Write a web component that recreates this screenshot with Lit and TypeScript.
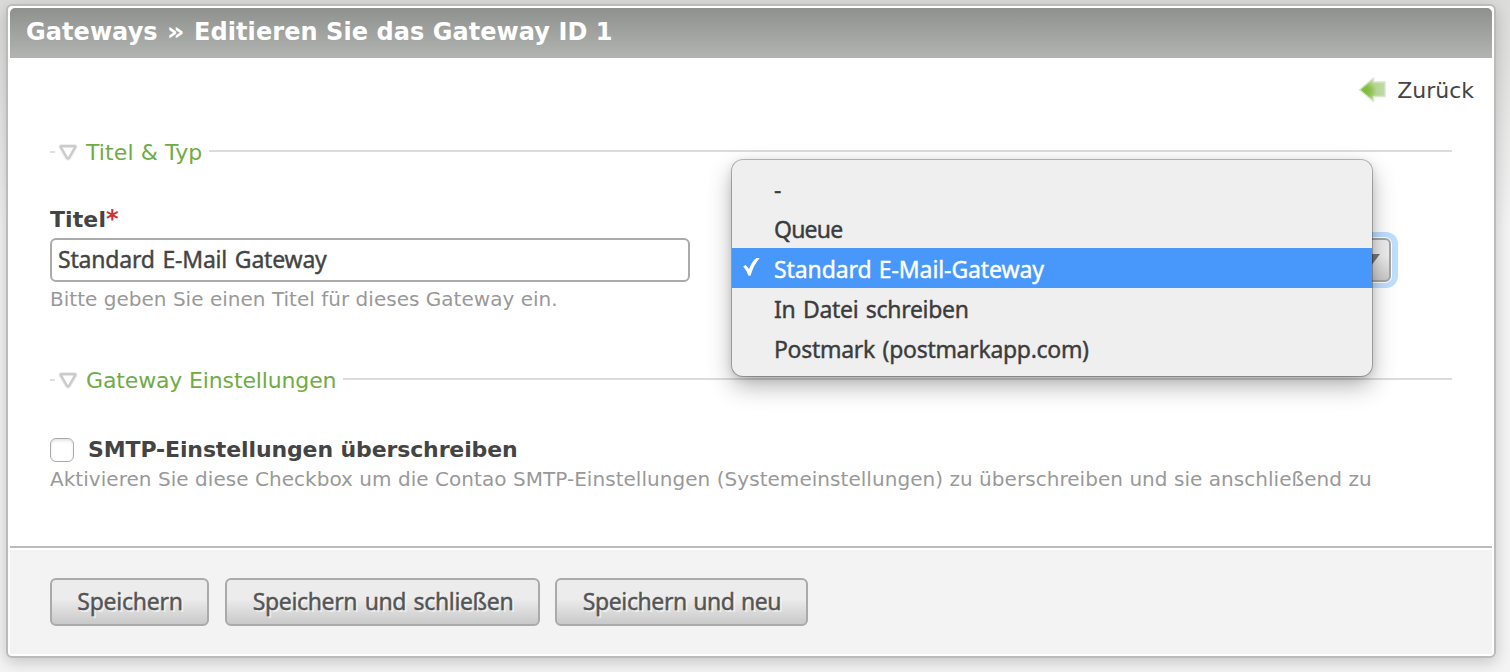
import { LitElement, html, css, svg } from "lit";
import { customElement, property, state } from "lit/decorators.js";
import { classMap } from "lit/directives/class-map.js";

@customElement("section-legend")
class SectionLegend extends LitElement {
  @property() label = "";
  static styles = css`
    :host { display: flex; align-items: center; height: 28px; margin-bottom: 2px; color: #6fac45; font-size: 22px; }
    .dash { width: 5px; height: 2px; background: #dfdfdf; margin-top: 2px; }
    .toggle { width: 20px; height: 18px; margin: 2px 8px 0 3px; flex: none; }
    .label { line-height: 28px; margin-top: 3px; letter-spacing: var(--legend-spacing, 0); white-space: nowrap; }
    .rule { flex: 1; height: 2px; background: #dcdcdc; margin-left: 7px; }
  `;
  render() {
    return html`
      <span class="dash"></span>
      <svg class="toggle" viewBox="0 0 20 18">
        <path d="M3.2 3.2H16.8Q17.6 3.2 17.2 4.2L11 14.8Q10 16.2 9 14.8L2.8 4.2Q2.4 3.2 3.2 3.2Z" fill="#fff" stroke="#eeeeee" stroke-width="4.4" stroke-linejoin="round"/>
        <path d="M3.2 3.2H16.8Q17.6 3.2 17.2 4.2L11 14.8Q10 16.2 9 14.8L2.8 4.2Q2.4 3.2 3.2 3.2Z" fill="#fff" stroke="#cbcbcb" stroke-width="2.4" stroke-linejoin="round"/>
      </svg>
      <span class="label">${this.label}</span>
      <span class="rule"></span>
    `;
  }
}

@customElement("gateway-menu")
class GatewayMenu extends LitElement {
  @state() selected = 2;
  private options = [
    { label: "-", fit: "" },
    { label: "Queue", fit: "queue" },
    { label: "Standard E-Mail-Gateway", fit: "standard" },
    { label: "In Datei schreiben", fit: "file" },
    { label: "Postmark (postmarkapp.com)", fit: "postmark" },
  ];
  static styles = css`
    :host {
      display: block; width: 640px; padding: 8px 0; background: #efefef; border-radius: 11px;
      box-shadow: 0 0 0 1px rgba(0, 0, 0, .25), 0 10px 24px rgba(0, 0, 0, .3), 0 2px 8px rgba(0, 0, 0, .12);
      font: 23px/40px "Noto Sans", sans-serif; color: #3c3c3c;
    }
    .option { display: flex; height: 40px; padding-left: 10px; cursor: default; white-space: nowrap; -webkit-text-stroke: .4px currentColor; }
    .option.selected { background: #4898fb; color: #fff; }
    .mark { width: 32px; height: 40px; flex: none; }
    .option span { padding-top: 1px; }
    .queue { letter-spacing: -.8px; }
    .standard { letter-spacing: -.1px; word-spacing: 1.5px; }
    .file { letter-spacing: -.3px; word-spacing: 1.8px; }
    .postmark { letter-spacing: -.3px; word-spacing: 2px; }
  `;
  render() {
    return html`${this.options.map((o, i) => html`
      <div class=${classMap({ option: true, selected: i === this.selected })} @click=${() => (this.selected = i)}>
        <svg class="mark" viewBox="0 0 32 40">
          ${i === this.selected ? svg`<path d="M1.2 18.6L3.6 17Q5.7 19 7 21Q10.3 12.4 14.4 9.9H17.8Q11.8 16.2 8.5 27.8H6.5Q4.7 22.4 1.2 18.6Z" fill="#fff"/>` : ""}
        </svg>
        <span class=${o.fit}>${o.label}</span>
      </div>`)}`;
  }
}

@customElement("app-root")
class AppRoot extends LitElement {
  static styles = css`
    * { box-sizing: border-box; }
    :host {
      display: block; height: 672px; padding: 4px 14px 14px 6px; box-sizing: border-box; overflow: hidden;
      background: linear-gradient(#dcdddb 0, #dfe0de 50px, #f4f4f4 230px, #f4f4f4);
      font-family: "DejaVu Sans", sans-serif; font-size: 22px; color: #444;
    }
    .panel {
      display: flex; flex-direction: column; height: 654px; border: 2px solid #bbb; border-radius: 6px;
      padding: 2px; background: #fff; box-shadow: 0 4px 16px rgba(0, 0, 0, .2);
    }
    .title {
      flex: none; height: 50px; margin: 0; padding-left: 16px; border-radius: 5px 5px 0 0;
      background: linear-gradient(#8f918e, #b2b4b1); color: #fff;
      font-size: 24px; font-weight: bold; line-height: 48px; letter-spacing: .06px;
    }
    .chevrons { display: inline-block; margin: 0 1px; transform: scaleX(1.15); padding: 0 1px; }
    .back { display: flex; justify-content: flex-end; align-items: center; height: 64px; padding-right: 18px; gap: 10px; }
    .back svg { width: 29px; height: 28px; }
    .form { flex: 1; display: flex; flex-direction: column; padding: 15px 40px 0; }
    .columns { display: grid; grid-template-columns: 640px 640px; column-gap: 60px; height: 198px; padding-top: 37px; }
    .field { display: flex; flex-direction: column; }
    .label { font-weight: bold; font-size: 22px; line-height: 34px; height: 34px; letter-spacing: -.12px; }
    .field .label { line-height: 32px; letter-spacing: .1px; }
    .required { color: #c33; font-size: 24px; line-height: 1; }
    .input {
      height: 44px; border: 2px solid #aaa; border-radius: 6px; padding: 0 6px 2px; background: #fff; width: 640px;
      font: 23px/38px "Noto Sans", sans-serif; color: #444; letter-spacing: -.2px; word-spacing: 2px; -webkit-text-stroke: .4px currentColor;
    }
    .help { margin: 0; font-size: 20px; line-height: 34px; color: #999; white-space: nowrap; letter-spacing: .02px; }
    .smtp-help { letter-spacing: .043px; margin-top: -5px; }
    .choice { position: relative; padding-top: 34px; }
    .select {
      display: flex; justify-content: flex-end; align-items: center; height: 44px; width: 641px; padding-right: 9px;
      border: 2px solid #a5a5a5; border-radius: 6px; background: linear-gradient(#ededed 40%, #c9c9c9);
      box-shadow: 0 0 0 1px #fff, 1px 0 0 6px #bfdfff;
    }
    .select svg { width: 18px; height: 12px; }
    gateway-menu { position: absolute; left: -18px; top: -44px; z-index: 2; }
    section-legend.first { --legend-spacing: .1px; }
    section-legend.second { --legend-spacing: -.14px; }
    .override { display: flex; align-items: center; gap: 14px; margin-top: 38px; height: 34px; }
    .check {
      width: 24px; height: 24px; margin: 0 0 1px; border: 1px solid #aaa; border-radius: 6px; background: #fff;
      box-shadow: inset 0 2px 3px rgba(0, 0, 0, .1); appearance: none;
    }
    .footer {
      flex: none; display: flex; gap: 16px; height: 108px; margin-top: auto; padding: 30px 40px 0; border-top: 2px solid #bbb;
      background: #f3f3f3; box-shadow: inset 0 2px #fff;
    }
    .button {
      height: 48px; padding: 0 0 2px; border: 2px solid #aaa; border-radius: 6px;
      background: linear-gradient(#ececec 0, #ececec 42%, #c9c9c9); color: #555; text-shadow: 2px 2px rgba(255, 255, 255, .55);
      font: 23px/42px "Noto Sans", sans-serif; -webkit-text-stroke: .4px currentColor;
      white-space: nowrap;
    }
    .save { width: 159px; letter-spacing: -.25px; padding-left: 1px; }
    .close { width: 315px; letter-spacing: -.35px; word-spacing: 1.8px; padding-left: 1px; }
    .new { width: 253px; margin-left: -1px; letter-spacing: -.4px; word-spacing: .8px; padding-left: 1px; }
  `;
  render() {
    return html`
      <main class="panel">
        <h1 class="title">Gateways <span class="chevrons">»</span> Editieren Sie das Gateway ID 1</h1>
        <div class="back">
          <svg viewBox="0 0 29 28">
            <defs>
              <radialGradient id="leaf" cx=".22" cy=".55" r=".75"><stop offset="0" stop-color="#7fb93d"/><stop offset=".3" stop-color="#8cc14f"/><stop offset=".6" stop-color="#b4d595"/><stop offset="1" stop-color="#bfdaa6"/></radialGradient>
            </defs>
            <path d="M1.5 13.7L15.5 2V6H27V20.5H15.5V25.5Z" fill="url(#leaf)" stroke="#d6e8c6" stroke-width="1.4" stroke-linejoin="round"/>
          </svg>
          <span class="back-text">Zurück</span>
        </div>
        <div class="form">
          <section-legend class="first" label="Titel &amp; Typ"></section-legend>
          <div class="columns">
            <div class="field">
              <label class="label">Titel<span class="required">*</span></label>
              <input class="input" .value=${"Standard E-Mail Gateway"} />
              <p class="help title-help">Bitte geben Sie einen Titel für dieses Gateway ein.</p>
            </div>
            <div class="choice">
              <div class="select"><svg viewBox="0 0 18 12"><path d="M0 0H18L9 12Z" fill="#777"/></svg></div>
              <gateway-menu></gateway-menu>
            </div>
          </div>
          <section-legend class="second" label="Gateway Einstellungen"></section-legend>
          <div class="override"><input class="check" type="checkbox" /><span class="label">SMTP-Einstellungen überschreiben</span></div>
          <p class="help smtp-help">Aktivieren Sie diese Checkbox um die Contao SMTP-Einstellungen (Systemeinstellungen) zu überschreiben und sie anschließend zu</p>
        </div>
        <footer class="footer">
          <button class="button save">Speichern</button>
          <button class="button close">Speichern und schließen</button>
          <button class="button new">Speichern und neu</button>
        </footer>
      </main>
    `;
  }
}
